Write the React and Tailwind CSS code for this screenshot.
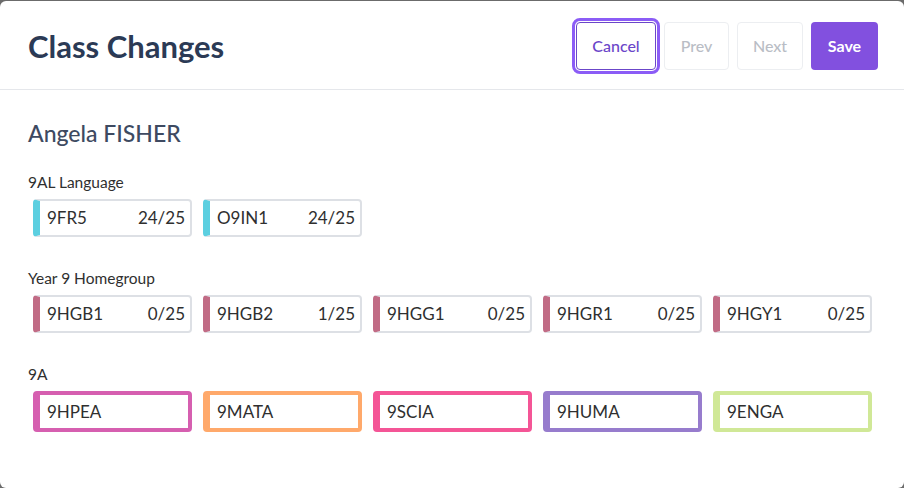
import React from "react";

const font = { fontFamily: "Lato, 'Open Sans', sans-serif" };

function CountCard({ name, count, bar }) {
  return (
    <div
      className={`h-[38px] flex items-center justify-between rounded-[4px] border-2 border-[#dde0e5] ${bar} pl-[7px] pr-[5px] text-[17px] text-[#2f2f2f]`}
    >
      <span>{name}</span>
      <span>{count}</span>
    </div>
  );
}

function ColorCard({ name, border }) {
  return (
    <div
      className={`h-[41px] flex items-center rounded-[4px] border-4 border-l-[7px] ${border} pl-[7px] text-[17px] text-[#2f2f2f]`}
    >
      <span>{name}</span>
    </div>
  );
}

export default function App() {
  return (
    <div className="w-[904px] h-[488px] bg-[#6b6b6b] pt-px" style={font}>
      <div className="h-[487px] bg-white rounded-[6px] flex flex-col">
        <header className="h-[89px] shrink-0 border-b border-[#e5e7eb] flex items-center justify-between pl-7 pr-[26px] pt-[2px]">
          <h1 className="text-[31px] font-bold text-[#2b3a55] leading-none">Class Changes</h1>
          <div className="flex gap-2">
            <button className="w-[80px] h-[48px] rounded-[4px] border border-[#6b46c9] text-[#6b46c9] text-[16px] font-medium outline-[3px] outline-solid outline-[#8b5cf6] outline-offset-[1px]">
              Cancel
            </button>
            <button className="w-[65px] h-[48px] rounded-[4px] border border-[#eceef1] text-[#b9bdc5] text-[16px] font-medium">
              Prev
            </button>
            <button className="w-[66px] h-[48px] rounded-[4px] border border-[#eceef1] text-[#b9bdc5] text-[16px] font-medium">
              Next
            </button>
            <button className="w-[67px] h-[48px] rounded-[4px] bg-[#8250df] text-white text-[16px] font-bold">
              Save
            </button>
          </div>
        </header>
        <div className="pl-7 pr-8 pt-[29px]">
          <h2 className="text-[23px] leading-[29px] font-medium text-[#3e4a61]">Angela FISHER</h2>

          <div className="mt-[24px] text-[15.5px] leading-[20px] text-[#2f2f2f]">9AL Language</div>
          <div className="mt-[7px] pl-[5px] grid grid-cols-5 gap-x-[11px] w-[844px]">
            <CountCard name="9FR5" count="24/25" bar="border-l-[7px] border-l-[#5ccfe0]" />
            <CountCard name="O9IN1" count="24/25" bar="border-l-[7px] border-l-[#5ccfe0]" />
          </div>

          <div className="mt-[31px] text-[15.5px] leading-[20px] text-[#2f2f2f]">Year 9 Homegroup</div>
          <div className="mt-[7px] pl-[5px] grid grid-cols-5 gap-x-[11px] w-[844px]">
            <CountCard name="9HGB1" count="0/25" bar="border-l-[7px] border-l-[#c16b85]" />
            <CountCard name="9HGB2" count="1/25" bar="border-l-[7px] border-l-[#c16b85]" />
            <CountCard name="9HGG1" count="0/25" bar="border-l-[7px] border-l-[#c16b85]" />
            <CountCard name="9HGR1" count="0/25" bar="border-l-[7px] border-l-[#c16b85]" />
            <CountCard name="9HGY1" count="0/25" bar="border-l-[7px] border-l-[#c16b85]" />
          </div>

          <div className="mt-[31px] text-[15.5px] leading-[20px] text-[#2f2f2f]">9A</div>
          <div className="mt-[7px] pl-[5px] grid grid-cols-5 gap-x-[11px] w-[844px]">
            <ColorCard name="9HPEA" border="border-[#d65fb0]" />
            <ColorCard name="9MATA" border="border-[#ffa96b]" />
            <ColorCard name="9SCIA" border="border-[#f45596]" />
            <ColorCard name="9HUMA" border="border-[#977ccd]" />
            <ColorCard name="9ENGA" border="border-[#d0e897]" />
          </div>
        </div>
      </div>
    </div>
  );
}
